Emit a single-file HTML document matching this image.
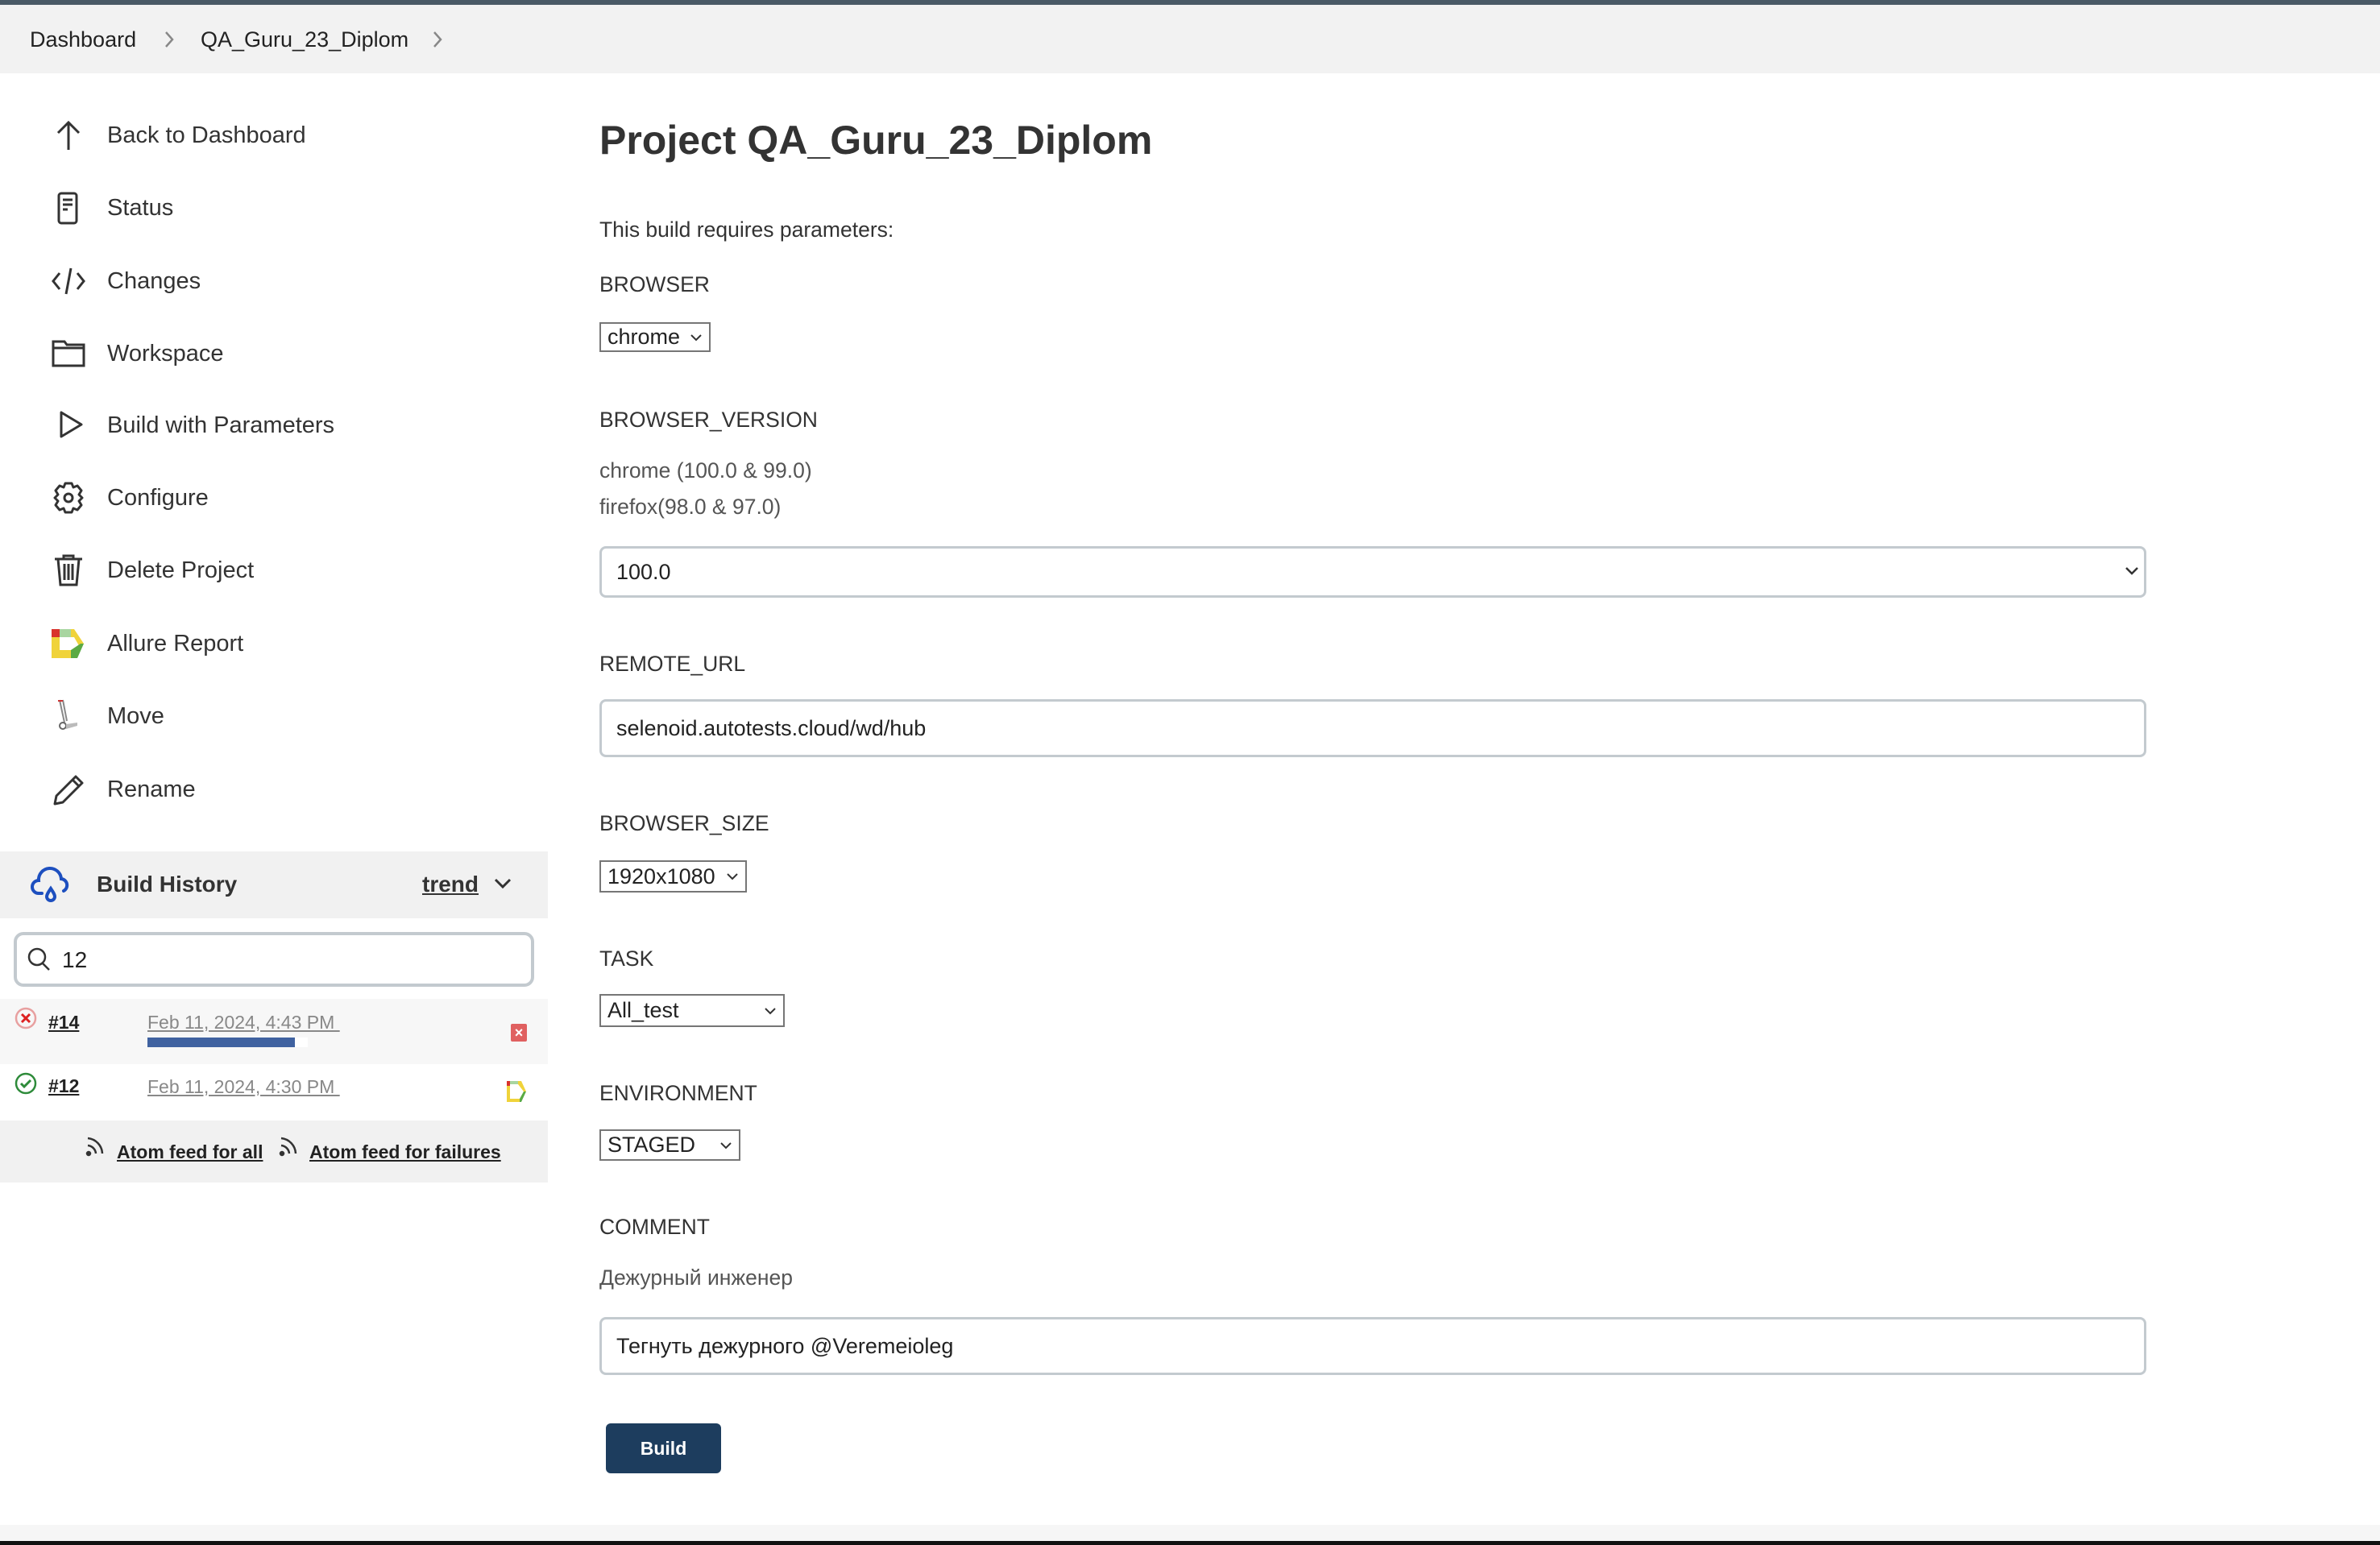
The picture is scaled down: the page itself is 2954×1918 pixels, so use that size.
<!DOCTYPE html>
<html><head><meta charset="utf-8"><style>
*{margin:0;padding:0;box-sizing:border-box}
body{width:2954px;height:1918px;position:relative;background:#fff;font-family:"Liberation Sans",Arial,sans-serif;color:#333;overflow:hidden}
.a{position:absolute;white-space:nowrap}
.nav{font-size:29px;color:#333;line-height:1}
.lbl{font-size:26.5px;color:#333;line-height:1}
.ic{position:absolute;left:64px}
.sel{position:absolute;border:2px solid #767676;background:#fff;font-size:27px;color:#222;padding-left:8px;display:flex;align-items:center}
.sel svg{position:absolute;right:8px}
.inp{position:absolute;left:744px;width:1920px;border:3px solid #c3cacf;border-radius:8px;background:#fff;font-size:27px;color:#222;padding-left:18px;display:flex;align-items:center}
a{color:inherit}
</style></head><body>
<div class="a" style="left:0;top:0;width:2954px;height:6px;background:#4a5a66"></div>
<div class="a" style="left:0;top:6px;width:2954px;height:85px;background:#f2f2f2"></div>
<div class="a" style="left:37px;top:34px;font-size:27px;color:#222">Dashboard</div>
<svg class="a" style="left:203px;top:37px" width="14" height="24" viewBox="0 0 14 24" fill="none" stroke="#888" stroke-width="2.5"><path d="M3 3l8 9-8 9"/></svg>
<div class="a" style="left:249px;top:34px;font-size:27px;color:#222">QA_Guru_23_Diplom</div>
<svg class="a" style="left:536px;top:37px" width="14" height="24" viewBox="0 0 14 24" fill="none" stroke="#888" stroke-width="2.5"><path d="M3 3l8 9-8 9"/></svg>

<svg class="ic" style="top:150px" width="42" height="38" viewBox="0 0 42 38" fill="none" stroke="#333" stroke-width="3"><path d="M21 36V3M8 15L21 2 34 15"/></svg>
<svg class="ic" style="top:238px" width="42" height="42" viewBox="0 0 42 42" fill="none" stroke="#333" stroke-width="3"><rect x="9" y="2" width="22" height="37" rx="3"/><path d="M14 10h12M14 16h12M14 22h6"/></svg>
<svg class="ic" style="top:332px" width="42" height="34" viewBox="0 0 42 34" fill="none" stroke="#333" stroke-width="3"><path d="M10 7L2 17l8 10M32 7l8 10-8 10M24 1l-6 32"/></svg>
<svg class="ic" style="top:420px" width="42" height="36" viewBox="0 0 42 36" fill="none" stroke="#333" stroke-width="3"><path d="M2 4h14l3 4h21v26H2zM2 12h38"/></svg>
<svg class="ic" style="top:509px" width="42" height="36" viewBox="0 0 42 36" fill="none" stroke="#333" stroke-width="3"><path d="M12 3v30l25-15z" stroke-linejoin="round"/></svg>
<svg class="ic" style="top:597px" width="42" height="42" viewBox="0 0 42 42" fill="none" stroke="#333" stroke-width="3"><path d="M17 3h8l2 5 5-2 5 6-3 5 4 4-4 4 3 5-5 6-5-2-2 5h-8l-2-5-5 2-5-6 3-5-4-4 4-4-3-5 5-6 5 2z" stroke-linejoin="round"/><circle cx="21" cy="21" r="5"/></svg>
<svg class="ic" style="top:688px" width="42" height="40" viewBox="0 0 42 40" fill="none" stroke="#333" stroke-width="3"><path d="M4 6h34M15 6V2h12v4M8 6l3 32h20l3-32M16 12v20M21 12v20M26 12v20"/></svg>
<svg class="ic" style="top:781px" width="42" height="36" viewBox="0 0 42 36"><path d="M0 0h10v10H0z" fill="#d9322b"/><path d="M10 0h14v10H10z" fill="#a8d5a0"/><path d="M24 0h4l12 18-4 6-8-14V10H24z" fill="#f0d33a"/><path d="M0 10h10v26H0z" fill="#f0d33a"/><path d="M10 26h14v10H10z" fill="#f0d33a"/><path d="M24 26l12-8 4 0-8 18H24z" fill="#5aaa44"/></svg>
<svg class="ic" style="top:867px" width="42" height="42" viewBox="0 0 42 42" fill="none"><path d="M10 2l6 28M14 2l5 26" stroke="#888" stroke-width="2"/><path d="M8 3h6" stroke="#c33" stroke-width="2"/><circle cx="14" cy="34" r="4" stroke="#666" stroke-width="2"/><path d="M18 32l14-2v4l-14 4z" fill="#bbb"/></svg>
<svg class="ic" style="top:960px" width="42" height="40" viewBox="0 0 42 40" fill="none" stroke="#333" stroke-width="3"><path d="M4 38l2-10L30 4l8 8-24 24zM26 8l8 8" stroke-linejoin="round"/></svg>

<div class="a nav" style="left:133px;top:154px">Back to Dashboard</div>
<div class="a nav" style="left:133px;top:244px">Status</div>
<div class="a nav" style="left:133px;top:335px">Changes</div>
<div class="a nav" style="left:133px;top:425px">Workspace</div>
<div class="a nav" style="left:133px;top:514px">Build with Parameters</div>
<div class="a nav" style="left:133px;top:604px">Configure</div>
<div class="a nav" style="left:133px;top:694px">Delete Project</div>
<div class="a nav" style="left:133px;top:785px">Allure Report</div>
<div class="a nav" style="left:133px;top:875px">Move</div>
<div class="a nav" style="left:133px;top:966px">Rename</div>

<div class="a" style="left:0;top:1057px;width:680px;height:83px;background:#f1f1f1"></div>
<svg class="a" style="left:38px;top:1075px" width="50" height="48" viewBox="0 0 50 48" fill="none" stroke="#1d4fbf" stroke-width="4"><path d="M14 34H10a8 8 0 010-16 14 14 0 0128-2 8 8 0 013 15" stroke-linecap="round"/><path d="M25 28c-4 6-5 8-5 10a5 5 0 0010 0c0-2-1-4-5-10z"/></svg>
<div class="a" style="left:120px;top:1082px;font-size:28px;font-weight:bold;color:#333">Build History</div>
<div class="a" style="left:524px;top:1082px;font-size:28px;font-weight:bold;color:#333;text-decoration:underline">trend</div>
<svg class="a" style="left:612px;top:1089px" width="24" height="16" viewBox="0 0 24 16" fill="none" stroke="#333" stroke-width="3"><path d="M3 3l9 9 9-9"/></svg>

<div class="a" style="left:17px;top:1157px;width:646px;height:68px;border:4px solid #c3cacf;border-radius:12px;background:#fff"></div>
<svg class="a" style="left:34px;top:1176px" width="30" height="30" viewBox="0 0 30 30" fill="none" stroke="#333" stroke-width="2.5"><circle cx="12" cy="12" r="10"/><path d="M19 20l8 8"/></svg>
<div class="a" style="left:77px;top:1176px;font-size:28px;color:#222">12</div>

<div class="a" style="left:0;top:1240px;width:680px;height:81px;background:#f7f7f7"></div>
<svg class="a" style="left:18px;top:1250px" width="28" height="28" viewBox="0 0 28 28" fill="none"><circle cx="14" cy="14" r="12" stroke="#e8a0a0" stroke-width="2.5"/><path d="M9 9l10 10M19 9L9 19" stroke="#d22" stroke-width="3"/></svg>
<div class="a" style="left:60px;top:1256px;font-size:23px;font-weight:bold;text-decoration:underline;color:#222">#14</div>
<div class="a" style="left:183px;top:1256px;font-size:23px;text-decoration:underline;color:#888">Feb 11, 2024, 4:43 PM&nbsp;</div>
<div class="a" style="left:183px;top:1288px;width:183px;height:12px;background:#4062a0"></div>
<div class="a" style="left:366px;top:1288px;width:16px;height:12px;background:#fff"></div>
<div class="a" style="left:634px;top:1271px;width:20px;height:22px;background:#e06060;border-radius:2px;color:#fff;font-size:18px;text-align:center;line-height:22px;font-weight:bold">×</div>

<svg class="a" style="left:18px;top:1331px" width="28" height="28" viewBox="0 0 28 28" fill="none"><circle cx="14" cy="14" r="12" stroke="#2e8b3a" stroke-width="2.5"/><path d="M8 14l4 4 8-8" stroke="#2e8b3a" stroke-width="3"/></svg>
<div class="a" style="left:60px;top:1335px;font-size:23px;font-weight:bold;text-decoration:underline;color:#222">#12</div>
<div class="a" style="left:183px;top:1336px;font-size:23px;text-decoration:underline;color:#888">Feb 11, 2024, 4:30 PM&nbsp;</div>
<svg class="a" style="left:629px;top:1342px" width="24" height="26" viewBox="0 0 24 26"><path d="M0 0h4v26H0z" fill="#f0d33a"/><path d="M0 0h4v6H0z" fill="#d9322b"/><path d="M4 0h10v4H4z" fill="#a8d5a0"/><path d="M14 0h4l6 13-3 0-7-9zM4 22h12v4H4z" fill="#f0d33a"/><path d="M16 22l5-9h3l-6 13h-2z" fill="#5aaa44"/></svg>

<div class="a" style="left:0;top:1391px;width:680px;height:77px;background:#f1f1f1"></div>
<svg class="a" style="left:106px;top:1410px" width="24" height="26" viewBox="0 0 24 26" fill="none" stroke="#333" stroke-width="2.5"><circle cx="4" cy="22" r="2" fill="#333"/><path d="M3 12a11 11 0 0110 10M3 3a20 20 0 0118 19"/></svg>
<div class="a" style="left:145px;top:1417px;font-size:23px;font-weight:bold;text-decoration:underline;color:#222">Atom feed for all</div>
<svg class="a" style="left:346px;top:1410px" width="24" height="26" viewBox="0 0 24 26" fill="none" stroke="#333" stroke-width="2.5"><circle cx="4" cy="22" r="2" fill="#333"/><path d="M3 12a11 11 0 0110 10M3 3a20 20 0 0118 19"/></svg>
<div class="a" style="left:384px;top:1417px;font-size:23px;font-weight:bold;text-decoration:underline;color:#222">Atom feed for failures</div>

<div class="a" style="left:744px;top:145px;font-size:50px;font-weight:bold;color:#333">Project QA_Guru_23_Diplom</div>
<div class="a" style="left:744px;top:270px;font-size:26.5px;color:#333">This build requires parameters:</div>
<div class="a lbl" style="left:744px;top:340px">BROWSER</div>
<div class="sel" style="left:744px;top:400px;width:138px;height:37px">chrome<svg width="16" height="10" viewBox="0 0 16 10" fill="none" stroke="#333" stroke-width="2"><path d="M2 2l6 6 6-6"/></svg></div>
<div class="a lbl" style="left:744px;top:508px">BROWSER_VERSION</div>
<div class="a" style="left:744px;top:569px;font-size:26.5px;color:#555">chrome (100.0 &amp; 99.0)</div>
<div class="a" style="left:744px;top:614px;font-size:26.5px;color:#555">firefox(98.0 &amp; 97.0)</div>
<div class="inp" style="top:678px;height:64px">100.0</div>
<svg class="a" style="left:2636px;top:703px" width="20" height="12" viewBox="0 0 20 12" fill="none" stroke="#333" stroke-width="2.5"><path d="M3 2l7 7 7-7"/></svg>
<div class="a lbl" style="left:744px;top:811px">REMOTE_URL</div>
<div class="inp" style="top:868px;height:72px">selenoid.autotests.cloud/wd/hub</div>
<div class="a lbl" style="left:744px;top:1009px">BROWSER_SIZE</div>
<div class="sel" style="left:744px;top:1068px;width:183px;height:40px">1920x1080<svg width="16" height="10" viewBox="0 0 16 10" fill="none" stroke="#333" stroke-width="2"><path d="M2 2l6 6 6-6"/></svg></div>
<div class="a lbl" style="left:744px;top:1177px">TASK</div>
<div class="sel" style="left:744px;top:1234px;width:230px;height:41px">All_test<svg width="16" height="10" viewBox="0 0 16 10" fill="none" stroke="#333" stroke-width="2"><path d="M2 2l6 6 6-6"/></svg></div>
<div class="a lbl" style="left:744px;top:1344px">ENVIRONMENT</div>
<div class="sel" style="left:744px;top:1402px;width:175px;height:39px">STAGED<svg width="16" height="10" viewBox="0 0 16 10" fill="none" stroke="#333" stroke-width="2"><path d="M2 2l6 6 6-6"/></svg></div>
<div class="a lbl" style="left:744px;top:1510px">COMMENT</div>
<div class="a" style="left:744px;top:1571px;font-size:26.5px;color:#555">Дежурный инженер</div>
<div class="inp" style="top:1635px;height:72px">Тегнуть дежурного @Veremeioleg</div>
<div class="a" style="left:752px;top:1767px;width:143px;height:62px;background:#1d3d5e;border-radius:6px;color:#fff;font-size:23px;font-weight:bold;text-align:center;line-height:62px">Build</div>

<div class="a" style="left:0;top:1893px;width:2954px;height:20px;background:#f6f6f6"></div>
<div class="a" style="left:0;top:1913px;width:2954px;height:5px;background:#111"></div>
</body></html>
